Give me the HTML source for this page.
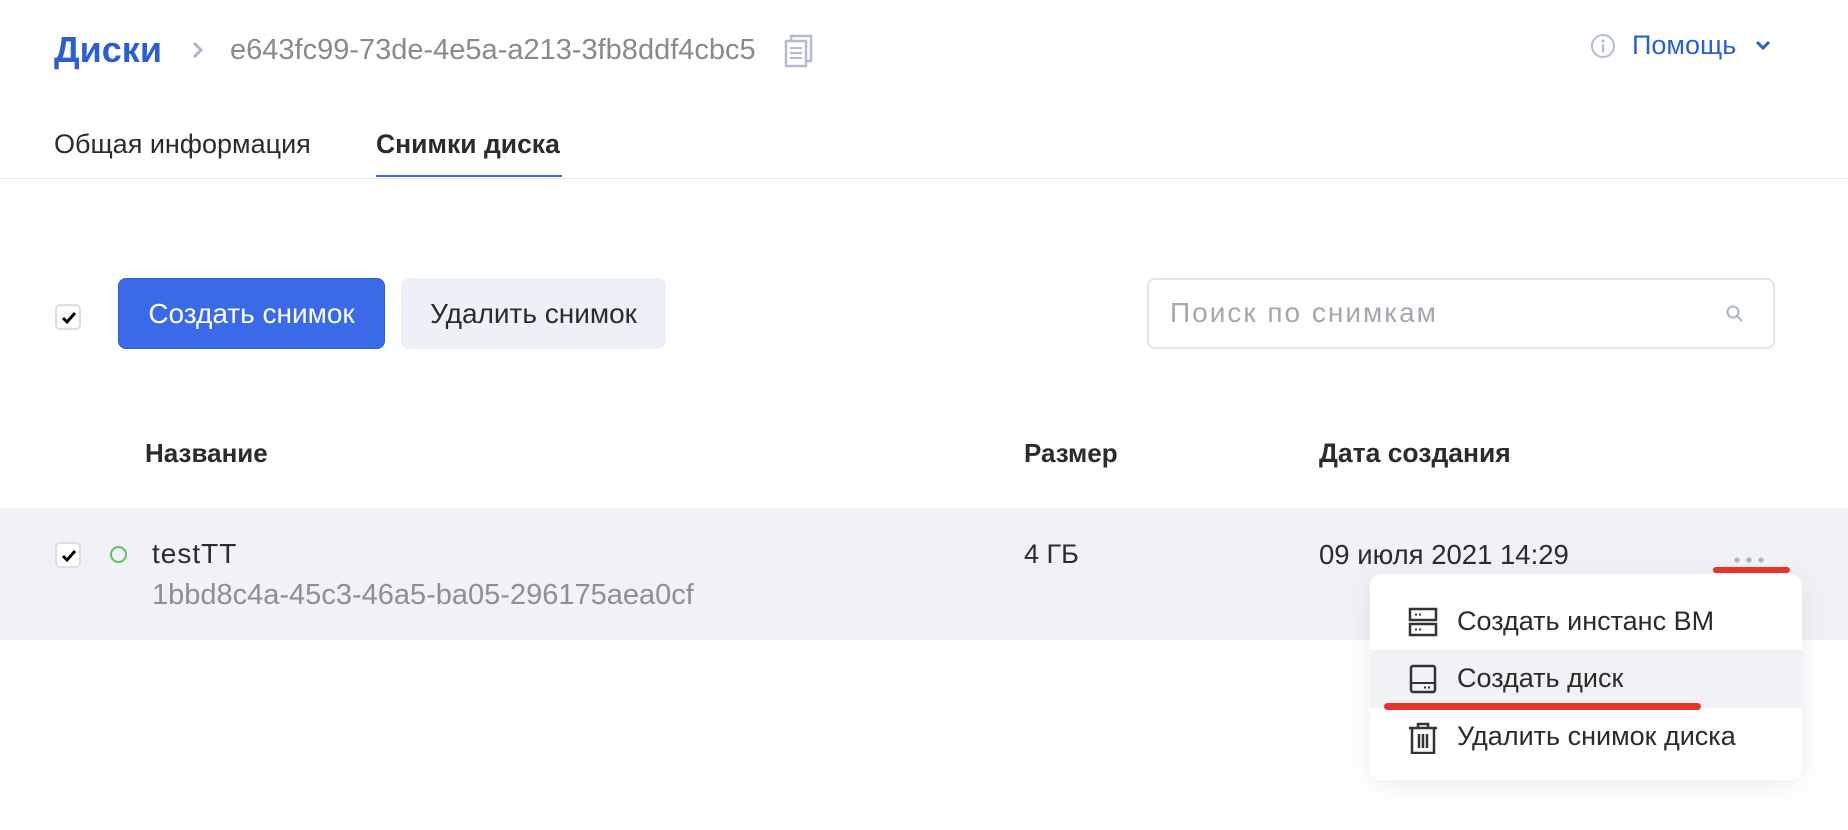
<!DOCTYPE html>
<html><head><meta charset="utf-8"><style>
*{box-sizing:border-box;margin:0;padding:0}
body{width:1848px;height:830px;background:#fff;font-family:"Liberation Sans",sans-serif;color:#2b2b2b;position:relative;overflow:hidden}
.a{position:absolute;white-space:nowrap}
.cb{position:absolute;width:26px;height:26px;border:2px solid #dcdde3;border-radius:5px;background:#fff}
.cb svg{position:absolute;left:4px;top:5px}
.mi{position:absolute;left:0;width:432px;height:58px}
.mi span{position:absolute;left:87px;top:13px;font-size:27px;color:#2b2b2b}
.mi svg{position:absolute;left:38px;top:14px}
</style></head><body>
<div class="a" style="left:54px;top:29px;font-size:36px;font-weight:bold;color:#2b5fd0">Диски</div>
<svg class="a" style="left:190px;top:40px" width="16" height="20" viewBox="0 0 16 20"><path d="M4 3l7 7-7 7" stroke="#aab5cc" stroke-width="3" fill="none"/></svg>
<div class="a" style="left:230px;top:34px;font-size:29px;color:#8a8a8a">e643fc99-73de-4e5a-a213-3fb8ddf4cbc5</div>
<svg class="a" style="left:784px;top:34px" width="30" height="34" viewBox="0 0 30 34"><rect x="7" y="2" width="20" height="25" fill="none" stroke="#b3bcce" stroke-width="2.5"/><rect x="2" y="7" width="20" height="25" fill="#fff" stroke="#b3bcce" stroke-width="2.5"/><path d="M6 14h12M6 19h12M6 24h12" stroke="#b3bcce" stroke-width="2"/></svg>
<svg class="a" style="left:1590px;top:33px" width="26" height="26" viewBox="0 0 26 26"><circle cx="13" cy="13" r="11" fill="none" stroke="#b3bcce" stroke-width="2"/><circle cx="13" cy="8" r="1.6" fill="#b3bcce"/><path d="M13 11.5v8" stroke="#b3bcce" stroke-width="2.2"/></svg>
<div class="a" style="left:1632px;top:30px;font-size:27px;color:#2b5fd0">Помощь</div>
<svg class="a" style="left:1754px;top:38px" width="18" height="14" viewBox="0 0 18 14"><path d="M3 4l6 6 6-6" stroke="#2b5fd0" stroke-width="3" fill="none"/></svg>

<div class="a" style="left:54px;top:129px;font-size:27px;color:#2b2b2b">Общая информация</div>
<div class="a" style="left:376px;top:129px;font-size:26.5px;font-weight:bold;color:#2b2b2b">Снимки диска</div>
<div class="a" style="left:0;top:178px;width:1848px;height:1px;background:#e5e7eb"></div>
<div class="a" style="left:376px;top:175px;width:186px;height:2px;background:#3a6ae8"></div>

<div class="cb" style="left:55px;top:304px"><svg width="16" height="14" viewBox="0 0 16 14"><path d="M2 7l4 4 8-9" stroke="#000" stroke-width="3" fill="none"/></svg></div>
<div class="a" style="left:118px;top:278px;width:267px;height:71px;background:#3a6ae8;border:1px solid #2f5bd0;border-radius:8px;color:#fff;font-size:28px;text-align:center;line-height:69px">Создать снимок</div>
<div class="a" style="left:401px;top:278px;width:265px;height:71px;background:#edf0f6;border-radius:8px;color:#2b2b2b;font-size:28px;text-align:center;line-height:71px">Удалить снимок</div>
<div class="a" style="left:1147px;top:278px;width:628px;height:71px;border:2px solid #e3e5ea;border-radius:8px"></div>
<div class="a" style="left:1170px;top:297px;font-size:28px;letter-spacing:2px;color:#a4a7ae">Поиск по снимкам</div>
<svg class="a" style="left:1725px;top:304px" width="20" height="20" viewBox="0 0 20 20"><circle cx="8" cy="8" r="5.5" fill="none" stroke="#aab5cc" stroke-width="2"/><path d="M12 12l5 5" stroke="#aab5cc" stroke-width="2"/></svg>

<div class="a" style="left:145px;top:438px;font-size:26px;font-weight:bold">Название</div>
<div class="a" style="left:1024px;top:438px;font-size:26px;font-weight:bold">Размер</div>
<div class="a" style="left:1319px;top:438px;font-size:26.5px;font-weight:bold">Дата создания</div>

<div class="a" style="left:0;top:508px;width:1848px;height:132px;background:#f1f2f6"></div>
<div class="cb" style="left:55px;top:542px"><svg width="16" height="14" viewBox="0 0 16 14"><path d="M2 7l4 4 8-9" stroke="#000" stroke-width="3" fill="none"/></svg></div>
<div class="a" style="left:110px;top:546px;width:17px;height:17px;border:2px solid #5cc45c;border-radius:50%"></div>
<div class="a" style="left:152px;top:538px;font-size:28px;letter-spacing:1px;color:#2b2b2b">testTT</div>
<div class="a" style="left:152px;top:579px;font-size:29px;color:#8f8f8f">1bbd8c4a-45c3-46a5-ba05-296175aea0cf</div>
<div class="a" style="left:1024px;top:539px;font-size:27px">4 ГБ</div>
<div class="a" style="left:1319px;top:539px;font-size:27.5px">09 июля 2021 14:29</div>
<svg class="a" style="left:1732px;top:555px" width="34" height="10"><circle cx="5" cy="5" r="2.6" fill="#aab5cc"/><circle cx="17" cy="5" r="2.6" fill="#aab5cc"/><circle cx="29" cy="5" r="2.6" fill="#aab5cc"/></svg>

<div class="a" style="left:1370px;top:574px;width:432px;height:206px;background:#fff;border-radius:12px;box-shadow:0 4px 30px rgba(0,0,0,0.08);overflow:hidden">
 <div class="mi" style="top:19px"><svg width="30" height="30" viewBox="0 0 30 30"><rect x="2" y="2" width="26" height="11" fill="none" stroke="#333" stroke-width="2.5"/><rect x="2" y="17" width="26" height="11" fill="none" stroke="#333" stroke-width="2.5"/><path d="M7 7.5h2M11 7.5h2M7 22.5h2M11 22.5h2" stroke="#333" stroke-width="2"/></svg><span>Создать инстанс ВМ</span></div>
 <div class="mi" style="top:76px;background:#f1f2f6"><svg width="30" height="30" viewBox="0 0 30 30"><rect x="3" y="2" width="24" height="26" rx="2" fill="none" stroke="#333" stroke-width="2.5"/><path d="M3 19h24M16 23.5h2M20 23.5h2" stroke="#333" stroke-width="2"/></svg><span>Создать диск</span></div>
 <div class="mi" style="top:134px"><svg width="30" height="32" viewBox="0 0 30 32"><path d="M1 6h28M10 6V2h10v4M4 6v25h22V6M11 12v14M15 12v14M19 12v14" stroke="#333" stroke-width="2.5" fill="none"/></svg><span>Удалить снимок диска</span></div>
</div>
<div class="a" style="left:1713px;top:567px;width:77px;height:6px;background:#e5352b;border-radius:3px"></div>
<div class="a" style="left:1384px;top:703px;width:317px;height:7px;background:#e5352b;border-radius:4px"></div>
</body></html>
